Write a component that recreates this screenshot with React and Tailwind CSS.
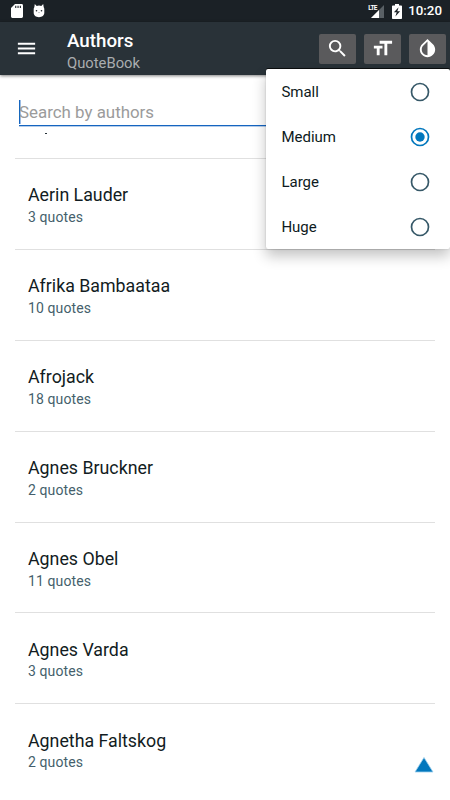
import React, { useState } from 'react';
import { MdSearch, MdFormatSize, MdInvertColors, MdMenu } from 'react-icons/md';

const AUTHORS = [
  { name: 'Aerin Lauder',     quotes: 3 },
  { name: 'Afrika Bambaataa', quotes: 10 },
  { name: 'Afrojack',         quotes: 18 },
  { name: 'Agnes Bruckner',   quotes: 2 },
  { name: 'Agnes Obel',       quotes: 11 },
  { name: 'Agnes Varda',      quotes: 3 },
  { name: 'Agnetha Faltskog', quotes: 2 },
];

const SIZES = ['Small', 'Medium', 'Large', 'Huge'];

const StatusBar = () => (
  <div className="flex items-center h-[22px] pl-[11px] pr-[8px] bg-[#1b2126] text-white">
    {/* SD card */}
    <svg className="w-[12px] h-[14px]" viewBox="0 0 12 14">
      <path fill="#fff" d="M4 0h6.6A1.4 1.4 0 0 1 12 1.4v11.2a1.4 1.4 0 0 1-1.4 1.4H1.4A1.4 1.4 0 0 1 0 12.6V4z" />
      <path fill="#1b2126" d="M4.2 1.8h1.1v2.3H4.2zM6.5 1.8h1.1v2.3H6.5zM8.8 1.8h1.1v2.3H8.8z" />
    </svg>
    {/* Android head */}
    <svg className="w-[12px] h-[14px] ml-[10px]" viewBox="0 0 12 14">
      <path fill="#fff" d="M1.800 0l1.900 2a6 6 0 0 1 4.600 0L10.200 0l.5 3.200a3 3 0 0 1 .6 2v3.600c0 2.800-2.200 4.400-5.300 4.400S.7 11.600.7 8.800V5.200a3 3 0 0 1 .6-2z" />
      <circle cx="3.500" cy="6.800" r=".8" fill="#1b2126" />
      <circle cx="8.500" cy="6.800" r=".8" fill="#1b2126" />
      <path fill="#9a9ea0" d="M5.300 8h1.400v.8H5.300z" />
    </svg>

    {/* Signal */}
    <div className="relative ml-auto w-[17px] h-[14px]">
      <svg className="absolute inset-0 w-[17px] h-[14px]" viewBox="0 0 17 14">
        <path fill="#596065" d="M17 1v13H4z" />
        <path fill="#fff" d="M12 6v8H4z" />
      </svg>
      <span className="absolute left-[1px] top-[1px] text-[6.5px] leading-[7px] font-bold tracking-[-0.6px]">LTE</span>
    </div>
    {/* Battery */}
    <svg className="w-[10px] h-[15px] ml-[8px]" viewBox="0 0 10 15">
      <path fill="#fff" d="M3 0h4v1.500h2.200a.8.8 0 0 1 .8.8v11.900a.8.8 0 0 1-.8.8H.8a.8.8 0 0 1-.8-.8V2.300a.8.8 0 0 1 .8-.8H3z" />
      <path fill="#1b2126" d="M6.600 3.300L1.900 8.300H4.700L3.400 12.400 8.100 7.300H5.300z" />
    </svg>
    <span className="ml-[6px] text-[13.3px] leading-[22px] font-medium">10:20</span>
  </div>
);

const ToolButton = ({ icon: Icon, label }) => (
  <button aria-label={label}
    className="flex items-center justify-center w-[37px] h-[30px] rounded-[2px] bg-[#5a5a5c] text-white">
    <Icon className="w-[23px] h-[23px]" />
  </button>
);

const SizeMenu = ({ value, onChange }) => (
  <div className="absolute left-[266px] top-[69px] w-[184px] h-[180px] rounded-[2px] bg-white
    shadow-[0_7px_14px_rgba(0,0,0,0.24),0_0_2px_rgba(0,0,0,0.2),0_-1px_0_rgba(0,0,0,0.7)]">
    {SIZES.map(size => (
      <div key={size}
        onClick={() => onChange(size)}
        className="flex items-center justify-between h-[45px] pl-[15px] pr-[20px] cursor-pointer
          text-[15px] text-[#0d1a21]">
        <span className="pt-[1px] pl-[0.4px]">{size}</span>
        <svg className="w-[20px] h-[20px]" viewBox="0 0 20 20">
          <circle cx="10" cy="10" r="8.500" fill="none" strokeWidth="1.700"
            stroke={value === size ? '#0277bd' : '#365868'} />
          {value === size && <circle cx="10" cy="10" r="4.700" fill="#0277bd" />}
        </svg>
      </div>
    ))}
  </div>
);

const App = () => {
  const [size, setSize] = useState('Medium');

  return (
    <main className="relative w-[450px] h-[800px] overflow-hidden bg-white
      font-['Roboto',sans-serif]">
      <StatusBar />

      {/* Toolbar */}
      <header className="relative flex items-center h-[53px] pl-[15px] pr-[4px]
        bg-[#293238] shadow-[0_1px_3px_rgba(0,0,0,0.5)]">
        <MdMenu className="w-[23px] h-[23px] text-white" />
        <div className="ml-[29px] mt-[7px]">
          <h1 className="text-[18.75px] leading-[23px] font-medium text-white">Authors</h1>
          <p className="text-[14.8px] leading-[21px] text-[#a9adaf]">QuoteBook</p>
        </div>
        <div className="flex gap-[8px] ml-auto">
          <ToolButton icon={MdSearch} label="Search" />
          <ToolButton icon={MdFormatSize} label="Text size" />
          <ToolButton icon={MdInvertColors} label="Invert colors" />
        </div>
      </header>

      {/* Search field */}
      <div className="flex items-center h-[51px] mx-[19px] pt-[24px]
        border-b border-[#1565c0] shadow-[0_1px_0_#b5cdea]">
        <span className="w-px h-[24px] bg-[#1565c0] shadow-[1px_0_0_#9dbde4]" />
        <span className="-ml-px text-[16.9px] leading-[24px] text-[#9b9b9b]">Search by authors</span>
      </div>

      {/* List */}
      <div className="mx-[15px]">
        <div className="h-[33px] pt-[7px] pl-[30px] border-b border-[#e0e0e0]">
          <div className="w-[2px] h-px bg-[#263238]" />
        </div>
        {AUTHORS.map(a => (
          <div key={a.name}
            className="h-[90.9px] pt-[24.4px] pl-[13px] border-b border-[#e0e0e0] last:border-b-0">
            <h2 className="text-[17.8px] leading-[24px] text-[#121c22]">{a.name}</h2>
            <p className="pt-[0.6px] text-[14px] leading-[19px] tracking-[0.1px] text-[#455f6c]">{a.quotes} quotes</p>
          </div>
        ))}
      </div>

      {/* Scroll to top */}
      <svg className="absolute left-[414px] top-[756px] w-[20px] h-[17px]" viewBox="0 0 20 17">
        <path fill="#0277bd" stroke="#9fd0ee" strokeWidth=".8" d="M10 1.500L19 16H1z" />
      </svg>

      <SizeMenu value={size} onChange={setSize} />
    </main>
  );
};

export default App;
